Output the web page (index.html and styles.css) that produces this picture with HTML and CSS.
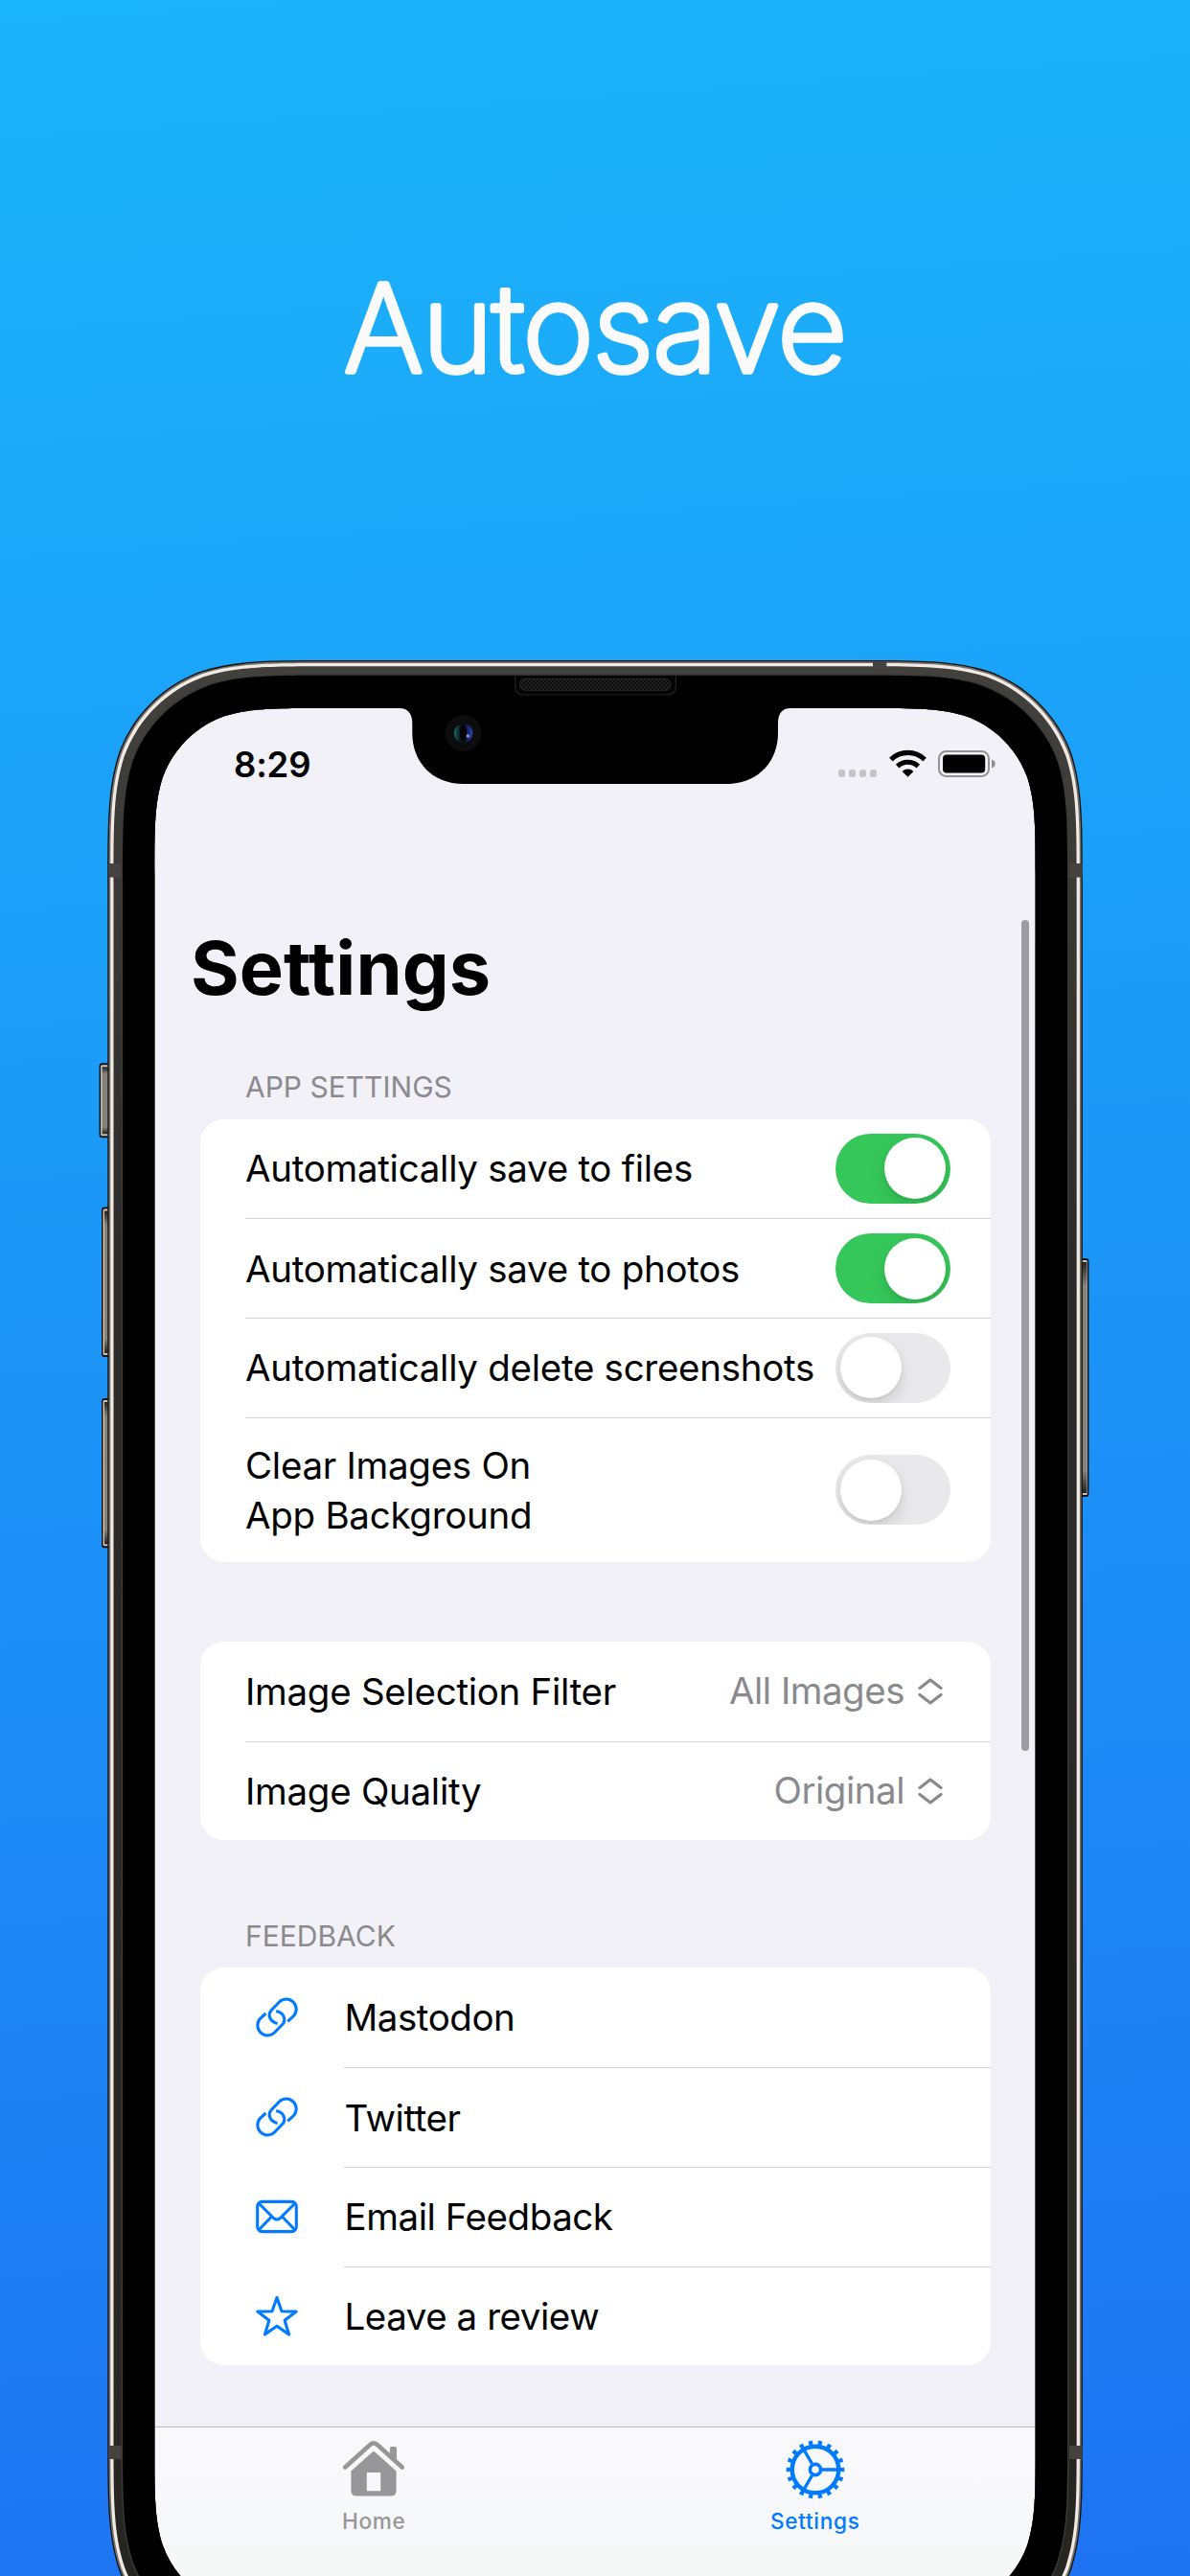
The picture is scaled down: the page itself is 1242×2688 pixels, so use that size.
FILE: index.html
```html
<!DOCTYPE html>
<html lang="en">
<head>
<meta charset="utf-8">
<title>Autosave</title>
<link rel="stylesheet" href="styles.css">
</head>
<body>
<main class="poster">
  <h1 class="headline">
    <svg class="headline-art" viewBox="0 0 1242 180"><text class="headline-text" x="621" y="134.500" text-anchor="middle">Autosave</text></svg>
  </h1>

  <section class="phone">
    <div class="screen">
      <header class="status">
        <span class="time">8:29</span>
        <div class="indicators">
          <span class="signal"><i></i><i></i><i></i><i></i></span>
          <svg class="wifi" viewBox="0 0 39 29"><g fill="none" stroke="#000" stroke-width="5.2"><path d="M1.9 10.6A25.2 25.2 0 0 1 37.1 10.6"/><path d="M8.7 17.6A15.6 15.6 0 0 1 30.3 17.6"/></g><path d="M13.6 22.9a8.4 8.4 0 0 1 11.8 0L19.5 28.8Z"/></svg>
          <svg class="battery" viewBox="0 0 60 28"><rect x="1" y="1" width="52" height="26" rx="7.5" fill="none" stroke="#929196" stroke-width="2"/><rect x="5" y="4.6" width="44.2" height="18.8" rx="4"/><path d="M56 9.5c5 1.200 5 7.800 0 9Z" fill="#929196"/></svg>
        </div>
      </header>

      <h2 class="title">Settings</h2>

      <h3 class="label">APP SETTINGS</h3>
      <ul class="card">
        <li class="row"><span class="name">Automatically save to files</span><b class="switch on"></b></li>
        <li class="row"><span class="name">Automatically save to photos</span><b class="switch on"></b></li>
        <li class="row"><span class="name">Automatically delete screenshots</span><b class="switch"></b></li>
        <li class="row tall"><span class="name">Clear Images On<br>App Background</span><b class="switch"></b></li>
      </ul>

      <ul class="card picks">
        <li class="row"><span class="name">Image Selection Filter</span><span class="value">All Images<svg class="updown" viewBox="0 0 26 28"><path d="M2 10.500 13 2 24 10.500M2 17.500 13 26 24 17.500"/></svg></span></li>
        <li class="row"><span class="name">Image Quality</span><span class="value">Original<svg class="updown" viewBox="0 0 26 28"><path d="M2 10.500 13 2 24 10.500M2 17.500 13 26 24 17.500"/></svg></span></li>
      </ul>

      <h3 class="label second">FEEDBACK</h3>
      <ul class="card links">
        <li class="row"><svg class="icon" viewBox="0 0 44 44"><use href="#chain"/></svg><span class="name">Mastodon</span></li>
        <li class="row"><svg class="icon" viewBox="0 0 44 44"><use href="#chain"/></svg><span class="name">Twitter</span></li>
        <li class="row"><svg class="icon" viewBox="0 0 44 44"><rect x="1.700" y="6.400" width="40.600" height="31.200" rx="5"/><path d="M3 8 18.500 23.500Q22 26.500 25.500 23.500L41 8M3 36 16.500 22M41 36 27.500 22"/></svg><span class="name">Email Feedback</span></li>
        <li class="row"><svg class="icon" viewBox="0 0 44 44"><path d="M22 2.500 27 16.800 42.200 17.100 30.100 26.200 34.600 40.900 22 32.200 9.400 40.900 13.900 26.200 1.800 17.100 17 16.800Z"/></svg><span class="name">Leave a review</span></li>
      </ul>

      <nav class="tabs">
        <a class="tab">
          <svg class="tab-icon" viewBox="0 0 64 64"><path d="M2.300 29.500 28.500 5.800Q32 3 35.500 5.800L61.700 29.500" fill="none" stroke="currentColor" stroke-width="4.600" stroke-linecap="round"/><path d="M49 17V9.500Q49 8 50.500 8H54.500Q56 8 56 9.500V23Z" fill="currentColor"/><path fill="currentColor" fill-rule="evenodd" d="M32 12.500 55.600 33.500V54Q55.600 59.500 50 59.500H14Q8.400 59.500 8.400 54V33.500ZM24.800 36V54.300H39.200V36Q39.200 35 38.200 35H25.800Q24.800 35 24.800 36Z"/></svg>
          <span>Home</span>
        </a>
        <a class="tab active">
          <svg class="tab-icon" viewBox="-32 -32 64 64"><g fill="none" stroke="currentColor"><circle r="24.300" stroke-width="4.400"/><circle r="28" stroke-width="4.600" stroke-dasharray="4.200 5.573" stroke-dashoffset="2.100" pathLength="175.914"/><circle r="5.600" stroke-width="3.600"/><path d="M7 0H24M-3.500 -6.060-12 -20.800M-3.500 6.060-12 20.800" stroke-width="3.300"/></g></svg>
          <span>Settings</span>
        </a>
      </nav>
    </div>
    <i class="scrollbar"></i>
    <svg class="frame" id="frame" viewBox="0 0 1242 2040"></svg>
  </section>
</main>
<svg class="defs">
  <defs><g id="chain"><path d="M22.600 28.400C14.800 26.800 11.600 19.400 16.600 14.200L24.300 6.200A10.400 10.400 0 0 1 39.200 20.800L33.200 26.400"/><path d="M21.200 15.600C29.200 17.200 32.400 24.600 27.400 29.800L19.700 37.800A10.400 10.400 0 0 1 4.800 23.200L10.400 18"/></g></defs>
</svg>
<script src="frame.js"></script>
</body>
</html>
```
FILE: styles.css
```css
* { box-sizing: border-box; margin: 0; padding: 0; }
body { font-family: Inter, "Liberation Sans", sans-serif; color: #000; }
ul { list-style: none; }
.poster { width: 1242px; height: 2688px; overflow: hidden; background: linear-gradient(176deg, #1bb5fb 0%, #1ba5f9 25%, #1c8ff6 60%, #1e73f2 100%); }
.headline { height: 688px; padding-top: 253px; font-weight: 200; }
.headline-art { display: block; width: 1242px; height: 180px; overflow: visible; }
.headline-text { font-size: 126px; font-weight: 200; letter-spacing: -1px; fill: #fafafa; stroke: #fafafa; stroke-width: 5.5px; stroke-linejoin: round; }
.phone { position: relative; height: 2040px; }
.frame { position: absolute; left: 0; top: 0; width: 1242px; height: 2040px; pointer-events: none; }
.defs { position: absolute; width: 0; height: 0; }

.screen { width: 921px; height: 2000px; margin-left: 160px; padding-top: 51px; background: #f2f1f7; clip-path: inset(51px 0 0 0 round 60px 60px 0 0); }
.status { height: 200px; padding: 36px 42px 0 84px; display: flex; justify-content: space-between; align-items: flex-start; }
.time { font-size: 36.500px; line-height: 46px; font-weight: 600; letter-spacing: -0.2px; }
.indicators { display: flex; align-items: flex-start; padding-top: 7px; }
.signal { display: flex; gap: 4px; margin: 21px 13px 0 0; }
.signal i { width: 7px; height: 8px; border-radius: 2.500px; background: #c4c3c8; }
.wifi { width: 39px; height: 29px; margin-right: 12px; }
.battery { width: 60px; height: 28px; margin-top: 1px; }

.title { height: 166px; padding: 24px 0 0 39px; font-size: 77.500px; line-height: 94px; font-weight: 700; letter-spacing: 0.100px; }
.label { height: 62.500px; padding: 11px 0 0 96px; font-size: 30px; line-height: 36px; font-weight: 400; color: #8a8a8e; }
.second { height: 133px; padding-top: 82px; }
.card { width: 825px; margin-left: 49px; border-radius: 25px; background: #fff; overflow: hidden; }
.row { height: 103.700px; margin-left: 47px; padding-right: 42px; display: flex; align-items: center; justify-content: space-between; font-size: 38.500px; line-height: 51.700px; letter-spacing: -0.280px; white-space: nowrap; }
.name { padding-top: 2px; }
.row + .row { border-top: 1.400px solid #d4d4d6; }
.tall { height: 151.500px; }
.picks { margin-top: 83px; }
.picks .row { padding-right: 50px; }
.value { display: flex; align-items: center; gap: 14px; color: #8a8a8e; letter-spacing: -0.500px; }
.updown { width: 26px; height: 28px; fill: none; stroke: #8a8a8e; stroke-width: 3.200; stroke-linecap: round; stroke-linejoin: round; }
.switch { width: 120px; height: 73px; padding: 4.500px 5px; border-radius: 37px; background: #e9e9eb; display: flex; overflow: hidden; }
.switch::before { content: ""; width: 64px; height: 64px; border-radius: 50%; background: #fff; box-shadow: 0 7px 16px rgba(0,0,0,.13), 0 2px 3px rgba(0,0,0,.05); }
.on { background: #35c759; justify-content: flex-end; }
.links .row { margin-left: 150px; justify-content: flex-start; letter-spacing: -0.450px; }
.icon { width: 44px; height: 44px; flex: none; margin: 0 48.500px 0 -92px; fill: none; stroke: #007aff; stroke-width: 3.100; stroke-linejoin: round; overflow: visible; }

.tabs { height: 200px; margin-top: 63.500px; border-top: 1.500px solid #b9b8bd; background: linear-gradient(#f9f9fc, #f6f7f7 160px); display: grid; grid-template-columns: 1fr 1fr; }
.tab { display: flex; flex-direction: column; align-items: center; padding-top: 12px; color: #979799; font-size: 22.600px; line-height: 30px; font-weight: 500; letter-spacing: 0.700px; }
.tab-icon { width: 64px; height: 64px; margin-bottom: 7px; }
.active { color: #007aff; }
.scrollbar { position: absolute; left: 1066px; top: 272px; width: 7.500px; height: 867px; border-radius: 4px; background: #9c9ba0; }
```
FILE: frame.js
```javascript
// Continuous-corner rounded rectangle, in phone coordinates.
function squircle(x, y, w, h, r) {
  const a = 1.528665 * r, b = 1.088493 * r, c = 0.868407 * r, d = 0.631494 * r;
  const e = 0.372824 * r, f = 0.16906 * r, g = 0.074911 * r, R = x + w, B = y + h;
  return `M${x + a} ${y}L${R - a} ${y}C${R - b} ${y} ${R - c} ${y} ${R - d} ${y + g}` +
    `C${R - e} ${y + f} ${R - f} ${y + e} ${R - g} ${y + d}C${R} ${y + c} ${R} ${y + b} ${R} ${y + a}` +
    `L${R} ${B - a}C${R} ${B - b} ${R} ${B - c} ${R - g} ${B - d}` +
    `C${R - f} ${B - e} ${R - e} ${B - f} ${R - d} ${B - g}C${R - c} ${B} ${R - b} ${B} ${R - a} ${B}` +
    `L${x + a} ${B}C${x + b} ${B} ${x + c} ${B} ${x + d} ${B - g}` +
    `C${x + e} ${B - f} ${x + f} ${B - e} ${x + g} ${B - d}C${x} ${B - c} ${x} ${B - b} ${x} ${B - a}` +
    `L${x} ${y + a}C${x} ${y + b} ${x} ${y + c} ${x + g} ${y + d}` +
    `C${x + f} ${y + e} ${x + e} ${y + f} ${x + d} ${y + g}C${x + c} ${y} ${x + b} ${y} ${x + a} ${y}Z`;
}
const hole = squircle(161.3, 51, 919.4, 1989, 114);
const ring = (i, fill) => `<path fill-rule="evenodd" fill="${fill}" d="${squircle(112.3 + i, 1 + i, 1017.6 - 2 * i, 2089 - 2 * i, 154 - i * 0.8)}${hole}"/>`;
const button = (x, y, w, h) => `<rect x="${x}" y="${y}" width="${w}" height="${h}" rx="3" fill="#111"/>` +
  `<rect x="${x + 1.5}" y="${y + 2}" width="${w - 3}" height="${h - 4}" rx="1.5" fill="#c9c3b9"/>` +
  `<rect x="${x + 3}" y="${y + 4}" width="${w - 5}" height="${h - 8}" fill="url(#metal)"/>`;
document.getElementById('frame').innerHTML = `
<defs>
  <linearGradient id="metal" x1="0" y1="0" x2="0" y2="1"><stop offset="0" stop-color="#222"/><stop offset=".1" stop-color="#85827b"/><stop offset=".9" stop-color="#85827b"/><stop offset="1" stop-color="#222"/></linearGradient>
  <linearGradient id="side" x1="0" y1="0" x2="0" y2="1"><stop offset="0" stop-color="#42413e"/><stop offset=".3" stop-color="#2c2b29"/><stop offset="1" stop-color="#262522"/></linearGradient>
  <pattern id="mesh" width="4" height="4" patternUnits="userSpaceOnUse"><rect width="4" height="4" fill="#0b0b0b"/><circle cx="1" cy="1" r=".9" fill="#2d2d2d"/><circle cx="3" cy="3" r=".9" fill="#2d2d2d"/></pattern>
  <linearGradient id="lens"><stop offset="0" stop-color="#1c6a62"/><stop offset=".35" stop-color="#07131c"/><stop offset=".6" stop-color="#0a1238"/><stop offset="1" stop-color="#2748b8"/></linearGradient>
</defs>
${button(103.6, 421.3, 12, 78)}${button(106, 571.6, 10, 156.300)}${button(106, 771, 10, 156.300)}${button(1126, 625, 10.4, 249)}
${ring(0, '#121212')}${ring(1.3, '#77736c')}${ring(3, '#f1ebe3')}${ring(6.2, 'url(#side)')}${ring(14.4, '#3a3a39')}${ring(15.8, '#000')}
<g fill="#46423f"><rect x="113" y="213" width="13.500" height="14.500"/><rect x="1116" y="213" width="13.500" height="14.500"/><rect x="113" y="1864" width="13.500" height="14"/><rect x="1116" y="1864" width="13.500" height="14"/><rect x="911" y="2.500" width="14.300" height="6.500"/></g>
<path d="M537.600 17V28Q537.600 37 547 37H696Q705.400 37 705.400 28V17" fill="#050505" stroke="#222" stroke-width="1.200"/>
<rect x="542.400" y="20.300" width="157.500" height="12" rx="6" fill="url(#mesh)" stroke="#292929"/>
<path d="M417 50V51C426 51 430.300 57 430.300 67V77C430.300 106 450 130 484 130H758C792 130 812 106 812 77V67C812 57 816 51 825 51V50Z"/>
<circle cx="483.600" cy="77" r="19" fill="#0d0d0e"/><circle cx="483.600" cy="77" r="9.800" fill="url(#lens)"/><ellipse cx="483.600" cy="77" rx="3.500" ry="8.500" fill="#000"/><circle cx="488.300" cy="80" r="1.700" fill="#a48bd6"/>`;
```
